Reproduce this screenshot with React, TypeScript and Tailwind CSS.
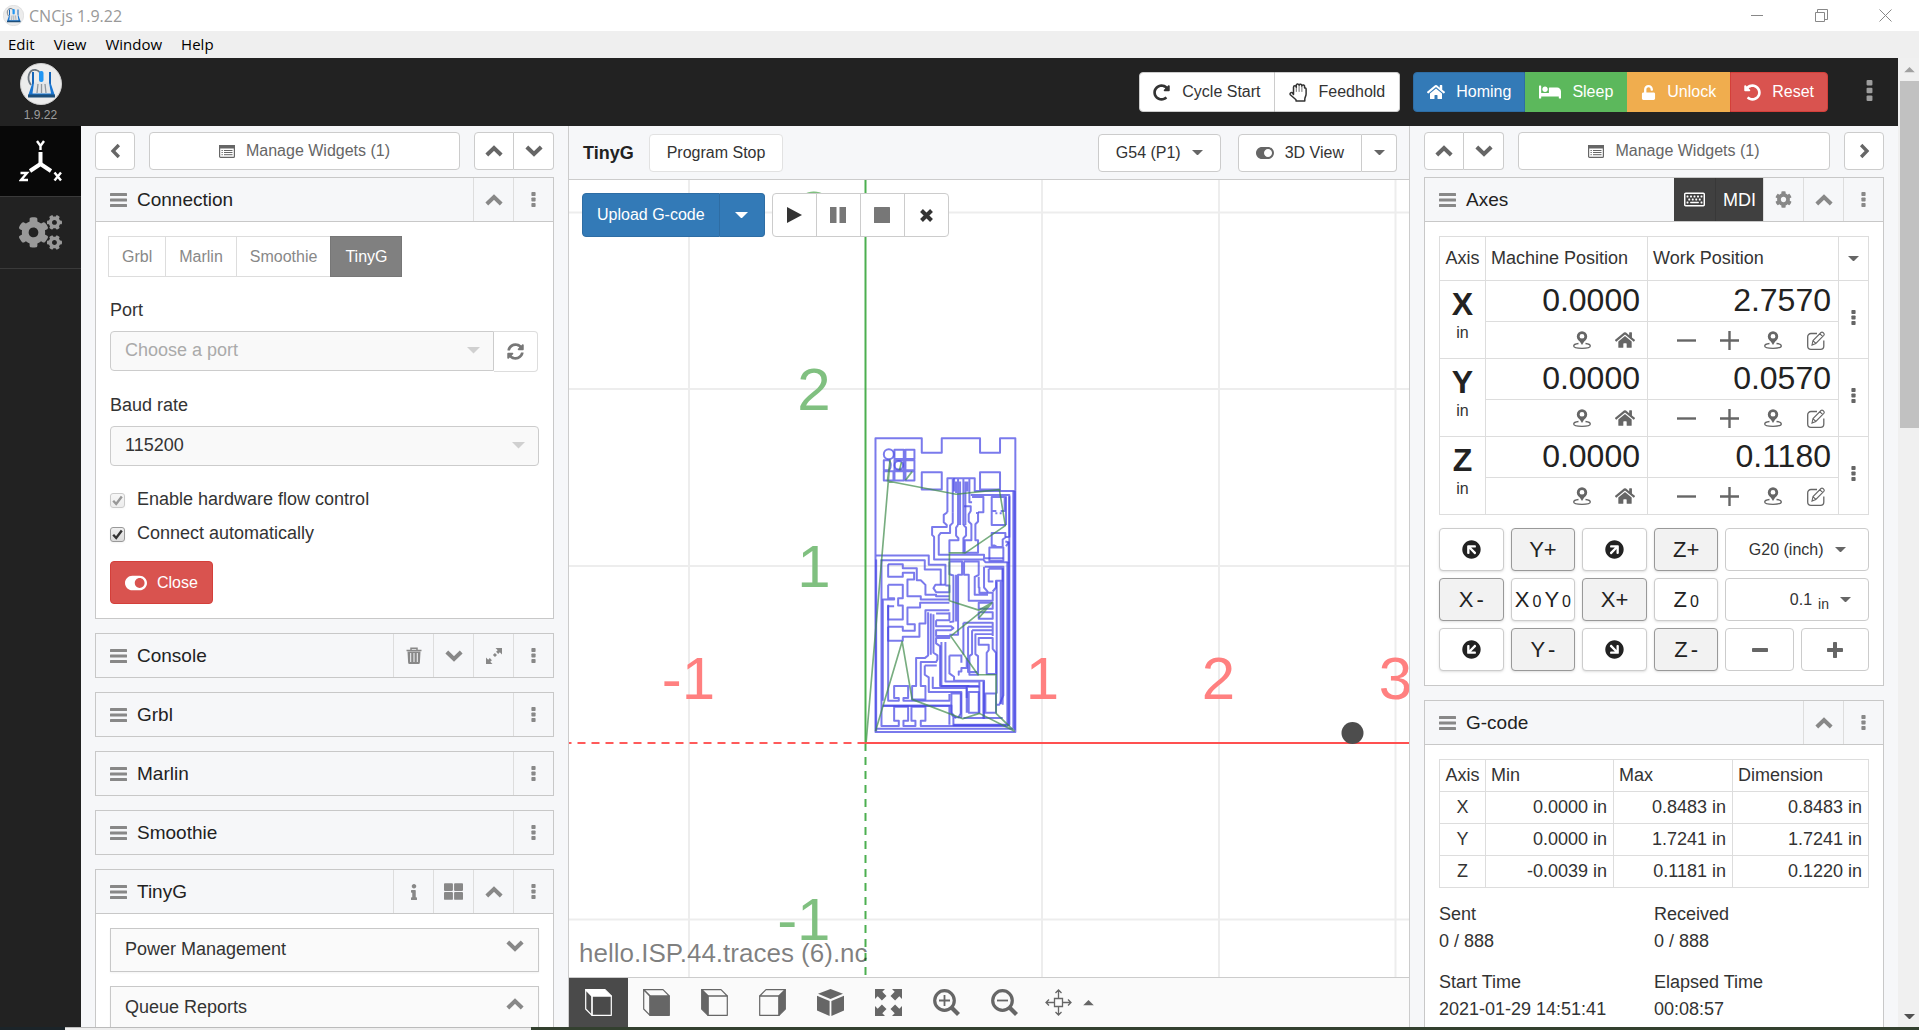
import React from "react";
import {
  FaArrowCircleUp,
  FaBed,
  FaCog,
  FaCogs,
  FaHome,
  FaInfo,
  FaRedoAlt,
  FaRegKeyboard,
  FaSyncAlt,
  FaThLarge,
  FaToggleOn,
  FaUndoAlt,
  FaUnlock,
} from "react-icons/fa";

type Dir = "up" | "down" | "left" | "right";

const chevronTurn: Record<Dir, string> = {
  up: "",
  down: "rotate-180",
  left: "-rotate-90",
  right: "rotate-90",
};

function Chevron({ dir, small = false }: { dir: Dir; small?: boolean }) {
  return (
    <svg viewBox="0 0 18 12" className={`${small ? "w-[15px]" : "w-[18px]"} shrink-0 ${chevronTurn[dir]}`} aria-hidden="true">
      <path d="M1.800 10 9 3l7.200 7" fill="none" stroke="currentColor" strokeWidth="4" />
    </svg>
  );
}

function Dots({ large = false }: { large?: boolean }) {
  return (
    <svg viewBox="0 0 5 15" className={large ? "h-[21px] w-[7px]" : "h-[15px] w-[5px]"} fill="currentColor" aria-hidden="true">
      <rect x="0.400" y="0" width="4.200" height="4" rx="0.800" />
      <rect x="0.400" y="5.500" width="4.200" height="4" rx="0.800" />
      <rect x="0.400" y="11" width="4.200" height="4" rx="0.800" />
    </svg>
  );
}

function Bars() {
  return (
    <svg viewBox="0 0 17 14" className="h-[14px] w-[17px] shrink-0 text-[#888]" fill="currentColor" aria-hidden="true">
      <rect y="0" width="17" height="3" rx="0.500" />
      <rect y="5.500" width="17" height="3" rx="0.500" />
      <rect y="11" width="17" height="3" rx="0.500" />
    </svg>
  );
}

function Caret({ up = false, wide = false }: { up?: boolean; wide?: boolean }) {
  return (
    <svg viewBox="0 0 12 6" className={`${wide ? "w-[13px]" : "w-[11px]"} shrink-0 ${up ? "rotate-180" : ""}`} fill="currentColor" aria-hidden="true">
      <path d="M0 0h12L6 6z" />
    </svg>
  );
}

function ListIcon() {
  return (
    <svg viewBox="0 0 16 13" className="h-[13px] w-4 text-[#666]" aria-hidden="true">
      <rect x="0.600" y="0.600" width="14.800" height="11.800" rx="1" fill="none" stroke="currentColor" strokeWidth="1.200" />
      <path d="M0 0h16v3.500H0z" fill="currentColor" />
      <path d="M2.500 5.500h1.300M2.500 7.500h1.300M2.500 9.700h1.300M5 5.500h8.500M5 7.500h8.500M5 9.700h8.500" stroke="currentColor" strokeWidth="1" />
    </svg>
  );
}

function HandIcon() {
  return (
    <svg viewBox="0 0 18 19" className="h-[19px] w-[18px]" fill="none" stroke="currentColor" strokeWidth="1.500" strokeLinejoin="round" strokeLinecap="round" aria-hidden="true">
      <path d="M4.500 11.500V4.200a1.400 1.400 0 0 1 2.800 0V2.800a1.400 1.400 0 0 1 2.800-.6 1.400 1.400 0 0 1 2.700.7 1.400 1.400 0 0 1 2.700.8l.1 1.200a1.200 1.200 0 0 1 1.500 1.200V11c0 2.300-1.300 3-1.300 5.200V18H7v-1.300L1.300 11.800a1.500 1.500 0 0 1 2-2.100z" />
      <path d="M7.300 4.500v4M10.100 3v5.500M12.900 3.500v5" strokeWidth="0.700" />
    </svg>
  );
}

function Logo({ className }: { className: string }) {
  return (
    <svg viewBox="0 0 42 42" className={className} aria-hidden="true">
      <circle cx="21" cy="21" r="20.500" fill="#ececec" stroke="#cfcfcf" />
      <path d="M11 22C6 15 9 6 16 7c4 1 5 3 5 7" fill="none" stroke="#6d7780" strokeWidth="1.800" />
      <path d="M13 9v12M30 9v12" stroke="#1565b8" strokeWidth="2" />
      <rect x="19" y="8" width="4.500" height="11" rx="2" fill="#2196f3" />
      <path d="M12 21h19l4 12H8z" fill="#1976d2" />
      <path d="M14 19.500h15l2 11H12.500z" fill="#e4e6e8" />
      <path d="M18 21l-1 9M21.500 21v9M25 21l1 9" stroke="#90979d" strokeWidth="1.300" />
      <path d="M8 31.500h27v3H8z" fill="#1d4e79" />
    </svg>
  );
}

function AxesLogo() {
  return (
    <svg viewBox="0 0 44 42" className="h-[42px] w-11" fill="none" stroke="#fff" aria-hidden="true">
      <path d="M21.500 12v13" strokeWidth="4" />
      <path d="M21.500 24 11 31M21.500 24 32 31" strokeWidth="4" />
      <path d="M18 1l3.500 5L25 1M21.500 5.500V10" strokeWidth="2.400" />
      <path d="M1.500 33H8l-6 7h7" strokeWidth="2.400" />
      <path d="M35.500 32.500l6.500 8M42 32.500l-6.500 8" strokeWidth="2.400" />
    </svg>
  );
}

function TrashIcon() {
  return (
    <svg viewBox="0 0 16 17" className="h-[17px] w-4" aria-hidden="true">
      <path d="M5 3V1.200h6V3M0.500 3.500h15" fill="none" stroke="currentColor" strokeWidth="1.500" />
      <path fillRule="evenodd" fill="currentColor" d="M1.500 4.500h13l-.6 11a1.500 1.500 0 0 1-1.500 1.500H3.600a1.500 1.500 0 0 1-1.500-1.500zM4.200 6v9h1V6zM7.500 6v9h1V6zM10.800 6v9h1V6z" />
    </svg>
  );
}

function ResizeIcon() {
  return (
    <svg viewBox="0 0 18 18" className="size-[18px]" fill="currentColor" aria-hidden="true">
      <path d="M10.500 1H17v6.500l-2.200-2.200-1.600 1.600-2.100-2.100 1.600-1.600zM9.900 6l2.100 2.100-2 2L7.900 8zM7.500 17H1v-6.500l2.200 2.200 1.600-1.600 2.100 2.100-1.600 1.600z" />
    </svg>
  );
}

function PinIcon() {
  return (
    <svg viewBox="0 0 18 18" className="size-[18px]" fill="none" stroke="currentColor" aria-hidden="true">
      <circle cx="9" cy="5.500" r="3.800" strokeWidth="2.800" />
      <path d="M5 7.500 9 14l4-6.500z" fill="currentColor" stroke="none" />
      <path d="M5.500 12.500C2.500 12.800.7 13.800.7 15c0 1.400 3.500 2.300 8.300 2.300s8.300-.9 8.300-2.300c0-1.200-1.800-2.200-4.800-2.500" strokeWidth="1.300" />
    </svg>
  );
}

function EditIcon() {
  return (
    <svg viewBox="0 0 18 19" className="h-[19px] w-[18px]" fill="none" stroke="currentColor" strokeWidth="1.300" aria-hidden="true">
      <path d="M10 2.500H4A3.300 3.300 0 0 0 .7 5.800v9.200A3.300 3.300 0 0 0 4 18.300h9.500a3.300 3.300 0 0 0 3.300-3.300V9.500" />
      <path d="M5 14l1-4.500 8-8a1.500 1.500 0 0 1 2 0l.8.800a1.500 1.500 0 0 1 0 2l-8 8.200zM13 2.800l2.800 2.800M6 9.700l2.700 2.700" strokeWidth="1.100" />
    </svg>
  );
}

function PlusIcon({ minus = false }: { minus?: boolean }) {
  return (
    <svg viewBox="0 0 19 19" className="size-[19px]" stroke="currentColor" strokeWidth="2.400" aria-hidden="true">
      <path d={minus ? "M0 9.500h19" : "M0 9.500h19M9.500 0v19"} />
    </svg>
  );
}

const iconFrame = "size-[27px] shrink-0";

function CubeIcon({ face, flip = false }: { face: "top" | "front" | "left"; flip?: boolean }) {
  const fill = (f: string) => (f === face ? "currentColor" : "none");
  return (
    <svg viewBox="0 0 27 27" className={`${iconFrame} ${flip ? "-scale-x-100" : ""}`} stroke="currentColor" strokeWidth="1.200" strokeLinejoin="round" aria-hidden="true">
      <path d="M.7.700H20L26.300 7H7z" fill={fill("top")} />
      <path d="M.7.700 7 7v19.300L.7 20z" fill={fill("left")} />
      <path d="M7 7h19.300v19.300H7z" fill={fill("front")} />
    </svg>
  );
}

function SolidCube() {
  return (
    <svg viewBox="0 0 27 27" className={iconFrame} fill="currentColor" aria-hidden="true">
      <path d="M13.500 0 26 4.800 13.500 10 1 4.800z" />
      <path d="M0 6.800 12.600 12v15L0 21.500zM27 6.800 14.400 12v15L27 21.500z" />
    </svg>
  );
}

function ExpandIcon() {
  const arrow = "M0 0h10L7.300 2.700l4.200 4.200-4.600 4.600-4.200-4.200L0 10z";
  return (
    <svg viewBox="0 0 27 27" className={iconFrame} fill="currentColor" aria-hidden="true">
      <path d={arrow} />
      <path d={arrow} transform="translate(27 0) scale(-1 1)" />
      <path d={arrow} transform="translate(0 27) scale(1 -1)" />
      <path d={arrow} transform="translate(27 27) scale(-1 -1)" />
    </svg>
  );
}

function ZoomIcon({ plus = false }: { plus?: boolean }) {
  return (
    <svg viewBox="0 0 27 27" className={iconFrame} fill="none" stroke="currentColor" aria-hidden="true">
      <circle cx="11.500" cy="11.500" r="9.800" strokeWidth="3.200" />
      <path d="M18.500 18.500 25.500 25.500" strokeWidth="4.200" />
      <path d={plus ? "M6 11.500h11M11.500 6v11" : "M6 11.500h11"} strokeWidth="1.800" />
    </svg>
  );
}

function PanIcon() {
  return (
    <svg viewBox="0 0 27 27" className={iconFrame} fill="none" stroke="currentColor" strokeWidth="1.300" aria-hidden="true">
      <path d="M9.500 9.500h8v8h-8zM13.500 9.500V1M10.500 4l3-3 3 3M13.500 17.500V26M10.500 23l3 3 3-3M9.500 13.500H1M4 10.500l-3 3 3 3M17.500 13.500H26M23 10.500l3 3-3 3" />
    </svg>
  );
}

const boxButton = "flex items-center justify-center border border-[#ccc] bg-white text-[#666]";

function ManageButton() {
  return (
    <button type="button" className={`${boxButton} h-[38px] flex-1 gap-[11px] rounded text-base text-[#333]`}>
      <ListIcon />
      Manage Widgets (1)
    </button>
  );
}

function ChevronPair() {
  return (
    <div className="flex">
      <button type="button" aria-label="Collapse all" className={`${boxButton} h-[38px] w-10 rounded-l`}>
        <Chevron dir="up" />
      </button>
      <button type="button" aria-label="Expand all" className={`${boxButton} h-[38px] w-10 rounded-r border-l-0`}>
        <Chevron dir="down" />
      </button>
    </div>
  );
}

function HeadButton({ label, children }: { label: string; children: React.ReactNode }) {
  return (
    <button type="button" aria-label={label} className="flex w-10 items-center justify-center border-l border-[#ddd] text-[#888]">
      {children}
    </button>
  );
}

function Widget({ title, tools, children }: { title: string; tools?: React.ReactNode; children?: React.ReactNode }) {
  return (
    <section className="shrink-0 border border-[#c8c8c8] bg-[#f6f7f9]">
      <header className="flex h-[43px] items-stretch">
        <div className="flex flex-1 items-center gap-2.5 pl-3.5">
          <Bars />
          <h2 className="text-[19px] leading-6 text-[#222]">{title}</h2>
        </div>
        {tools}
        <HeadButton label={`${title} menu`}>
          <Dots />
        </HeadButton>
      </header>
      {children && <div className="border-t border-[#c8c8c8] bg-white py-3.5">{children}</div>}
    </section>
  );
}

function Check({ label, id, muted = false }: { label: string; id: string; muted?: boolean }) {
  return (
    <div className="flex h-6 items-center gap-3">
      <span className={`grid size-[15px] ${muted ? "opacity-50" : ""}`}>
        <input
          id={id}
          type="checkbox"
          defaultChecked
          disabled={muted}
          className="col-start-1 row-start-1 size-[15px] appearance-none rounded-[3px] border border-[#999] bg-linear-to-b from-[#f0f0f0] to-[#dcdcdc] shadow-xs"
        />
        <svg viewBox="0 0 15 15" className="pointer-events-none col-start-1 row-start-1 size-[15px]" aria-hidden="true">
          <path d="M3.200 7.800 6.200 11 11.800 3.500" fill="none" stroke="#333" strokeWidth="2.400" />
        </svg>
      </span>
      <label htmlFor={id} className="pb-0.5 leading-6">
        {label}
      </label>
    </div>
  );
}

function ConnectionWidget() {
  return (
    <Widget
      title="Connection"
      tools={
        <HeadButton label="Collapse">
          <Chevron dir="up" />
        </HeadButton>
      }
    >
      <div className="flex px-3 text-base">
        {["Grbl", "Marlin", "Smoothie"].map((name) => (
          <button key={name} type="button" className="h-[41px] border border-r-0 border-[#ddd] px-[13px] text-[#888]">
            {name}
          </button>
        ))}
        <button type="button" className="h-[41px] border border-[#777] bg-[#808080] px-3.5 text-white">
          TinyG
        </button>
      </div>
      <div className="px-3.5 text-lg text-[#333]">
        <label htmlFor="port" className="mt-[21px] mb-[9px] block leading-6">
          Port
        </label>
        <div className="flex h-[41px]">
          <div className="relative flex-1">
            <select id="port" disabled className="h-10 w-full appearance-none rounded-l border border-[#ccc] bg-[#f9f9f9] px-3.5 pb-0.5 text-[#aaa] opacity-100">
              <option>Choose a port</option>
            </select>
            <span className="pointer-events-none absolute top-4 right-3.5 text-[#d0d0d0]">
              <Caret wide />
            </span>
          </div>
          <button type="button" aria-label="Refresh ports" className="mr-px flex w-11 items-center justify-center rounded-r border border-l-0 border-[#ddd] text-[#777]">
            <FaSyncAlt size={17} />
          </button>
        </div>
        <label htmlFor="baud" className="mt-[21px] mb-[9px] block leading-6">
          Baud rate
        </label>
        <div className="relative">
          <select id="baud" disabled className="block h-10 w-full appearance-none rounded border border-[#ccc] bg-[#f9f9f9] px-3.5 pb-0.5 text-[#333] opacity-100">
            <option>115200</option>
          </select>
          <span className="pointer-events-none absolute top-4 right-3.5 text-[#d0d0d0]">
            <Caret wide />
          </span>
        </div>
        <div className="mt-[22px] flex flex-col gap-2.5">
          <Check id="flow" label="Enable hardware flow control" muted />
          <Check id="auto" label="Connect automatically" />
        </div>
        <button type="button" className="mt-[15px] flex h-[43px] items-center gap-2.5 rounded border border-[#d43f3a] bg-[#d9534f] px-3.5 text-base text-white">
          <FaToggleOn size={22} />
          Close
        </button>
      </div>
    </Widget>
  );
}

function Fold({ title, dir }: { title: string; dir: Dir }) {
  return (
    <button type="button" className="flex h-11 w-full items-center justify-between border border-[#c8c8c8] bg-[#fafafa] px-3.5 pb-0.5 text-lg text-[#333] shadow-xs">
      {title}
      <span className="pb-1.5 text-[#888]">
        <Chevron dir={dir} />
      </span>
    </button>
  );
}

function LeftPane() {
  return (
    <div className="flex w-[487px] shrink-0 flex-col gap-3.5 overflow-hidden px-3.5 pt-1.5">
      <div className="-mb-[7px] flex gap-3.5">
        <button type="button" aria-label="Hide left panel" className={`${boxButton} h-[38px] w-10 rounded`}>
          <Chevron dir="left" small />
        </button>
        <ManageButton />
        <ChevronPair />
      </div>
      <ConnectionWidget />
      <Widget
        title="Console"
        tools={
          <>
            <HeadButton label="Clear">
              <TrashIcon />
            </HeadButton>
            <HeadButton label="Expand">
              <Chevron dir="down" />
            </HeadButton>
            <HeadButton label="Full screen">
              <ResizeIcon />
            </HeadButton>
          </>
        }
      />
      <Widget title="Grbl" />
      <Widget title="Marlin" />
      <Widget title="Smoothie" />
      <Widget
        title="TinyG"
        tools={
          <>
            <HeadButton label="Info">
              <FaInfo size={16} />
            </HeadButton>
            <HeadButton label="Modules">
              <FaThLarge size={19} />
            </HeadButton>
            <HeadButton label="Collapse">
              <Chevron dir="up" />
            </HeadButton>
          </>
        }
      >
        <div className="flex flex-col gap-3.5 px-3.5">
          <Fold title="Power Management" dir="down" />
          <Fold title="Queue Reports" dir="up" />
        </div>
      </Widget>
    </div>
  );
}

const traces = [
  "M48 40H187V83H247V40H362V83H422V40H468V922H48Z",
  "M187 142H247V194H187ZM362 142H422V194H362Z",
  "M105 74h28v28h-28zM138 74h27v28h-27zM73 106h16q10 15 0 30H73zM105 106h28v30h-28zM138 106h27v30h-27zM73 139h29v28H73zM105 139h28v28h-28zM138 139h27v28h-27z",
  "M264 262V160H346V198H466M280 160V262M296 160V300M312 160V300M330 160V232H338",
  "M264 262L253 270V292L262 300V306H218V330L224 336V404H372L378 412H448V352L438 350M448 336L438 336",
  "M280 262V294L272 302V324H244L238 332V390H374V400H432",
  "M284 160V200M290 170V204M302 170V300M318 170V300M324 170V200",
  "M296 300L290 308V332L297 340V346H270V384M312 300L320 308V332L312 340V386",
  "M314 244H334V258L328 268V290L336 298V346H316V384H356V346H348V298L356 290V264H350",
  "M356 262H372V216H338M334 210H450V338M440 300V214M466 198V916",
  "M397 258V216H436V258H424M411 258H397V300H440M411 262V268M424 262V268",
  "M397 324H438V338L430 344V366H412L406 362H397ZM390 368H432V408H390ZM448 352L440 364",
  "M50 392H208V420H258V480M64 406H196V434H244V480M50 404V920",
  "M66 404V904H118V888H104V846H146V888H132V904H168V888H156V846H198V888H184V904H444V412",
  "M86 418H130V430H172V466H184L198 480V510H230V514H270",
  "M86 418V456H130V444H164V464H144V514H184V524H270",
  "M86 480H130V520H116V542H130V584H86V544H104M86 480V520H104V524H70V828",
  "M86 540V828H118V820H104V784H146V820H132V828H270V808",
  "M86 606V648H130V636H180V596H198V556H270M86 606H130V618H166V598H144V548H182V534H270",
  "M258 480H228L222 490L230 502H270V482H258",
  "M206 562V692L196 700H170V784H158V824H198V784H184V712H230L234 704V692L222 684V568",
  "M230 566H270M230 586H270V562M214 566V690M230 586V604H274L282 610L274 616H230V634H270V640H230V656L242 664V784H330",
  "M196 722H232M196 722V750L208 758V802H306V878H282L276 866V842H70M220 756V790H322V820",
  "M270 410H308V450H296V630H270M270 410V448L282 452V590L270 592M290 450V590",
  "M314 410H358V450L346 456V510H386M314 410V450H328V528H400V504H360V488H358V456",
  "M374 426V488L386 502M376 426H432V812L420 840H412M388 432H430V468H410V488L400 500M388 432V470H402",
  "M358 534H400V552H358ZM358 562H400V582H358ZM312 594H400V606M312 594V690M326 606H400V634M326 606V742H356M338 616H398M338 616V688L330 694V750H356V694L348 688V628H398",
  "M358 640H400V672L410 684V748H382V684L388 676V660H358Z",
  "M258 652V770H360V866M246 652V784H358M270 692H306V714M270 692V746L284 756V768H374V880H312M300 750H298V740H306V730H322V700",
  "M328 802H358V864H328ZM322 786V864M322 786H360M378 806H410V864H378ZM372 770V880H430",
  "M274 806H304V866L296 880M276 806V864L290 880M282 880V902H440",
  "M424 470V838M412 470V806M430 430V840M448 412V904M70 844H270V900",
  "M462 200V912M450 214V900H282M50 912H462",
];

const travels =
  "M20 952 92 104M92 104 84 168 290 208 420 194 438 302 318 384H270V528L358 556 398 534 274 634 356 750H410V866M398 534 358 580M120 136 126 112M138 166 158 140M48 920 128 650 158 824 310 882 360 866 466 920M466 920 410 866";

function Canvas() {
  return (
    <svg viewBox="569 180 841 797" preserveAspectRatio="xMidYMid slice" className="absolute inset-0 size-full" role="img" aria-label="Toolpath preview">
      <path d="M689.500 180V977M1042.500 180V977M1219.500 180V977M1396 180V977M569 212.500H1410M569 389H1410M569 566H1410M569 919.500H1410" stroke="#ededed" strokeWidth="2" />
      <g transform="translate(860 425) scale(0.333)" fill="none" strokeLinejoin="round">
        <g stroke="#4646e4" strokeWidth="6" strokeOpacity="0.720">
          {traces.map((d) => (
            <path key={d} d={d} />
          ))}
          <circle cx="88" cy="88" r="15" />
          <circle cx="118" cy="121" r="13" />
        </g>
        <path d={travels} stroke="#3f8a4a" strokeWidth="5" strokeOpacity="0.700" />
      </g>
      <path d="M866 180V743" stroke="#4caf50" strokeWidth="2" />
      <path d="M866 743V977" stroke="#4caf50" strokeWidth="2" strokeDasharray="8 6" />
      <path d="M866 743H1410" stroke="#ff5050" strokeWidth="2" />
      <path d="M866 743H569" stroke="#ff5a5a" strokeWidth="2" strokeDasharray="8 6" />
      <g fontFamily="Liberation Sans, Arial, sans-serif" fontSize="60" fill="#80c080" textAnchor="end">
        <text x="831" y="233">3</text>
        <text x="831" y="410">2</text>
        <text x="831" y="587">1</text>
        <text x="831" y="940">-1</text>
      </g>
      <g fontFamily="Liberation Sans, Arial, sans-serif" fontSize="60" fill="#ff8080" textAnchor="middle">
        <text x="689" y="699">-1</text>
        <text x="1043" y="699">1</text>
        <text x="1219" y="699">2</text>
        <text x="1396" y="699">3</text>
      </g>
      <circle cx="1353" cy="733" r="11" fill="#4d4d4d" />
    </svg>
  );
}

function CenterPane() {
  return (
    <main className="flex min-w-0 flex-1 flex-col border-x border-[#ccc]">
      <div className="flex h-[54px] items-center border-b border-[#ccc] pr-3 pl-3.5">
        <strong className="text-lg font-bold text-[#222]">TinyG</strong>
        <span className="ml-[15px] flex h-[38px] items-center rounded border border-[#e2e2e2] bg-white px-[17px] text-base text-[#333]">Program Stop</span>
        <button type="button" className={`${boxButton} ml-auto h-[38px] gap-[11px] rounded px-[17px] text-base`}>
          <span className="text-[#333]">G54 (P1)</span>
          <Caret />
        </button>
        <div className="ml-[17px] flex">
          <button type="button" className={`${boxButton} h-[38px] gap-[11px] rounded-l px-[17px] text-base`}>
            <FaToggleOn size={18} />
            <span className="text-[#333]">3D View</span>
          </button>
          <button type="button" aria-label="View options" className={`${boxButton} h-[38px] w-[35px] rounded-r border-l-0`}>
            <Caret />
          </button>
        </div>
      </div>
      <div className="relative flex-1 overflow-hidden bg-white">
        <Canvas />
        <div className="relative flex gap-[7px] px-[13px] pt-[13px]">
          <div className="flex h-11 text-base text-white">
            <button type="button" className="rounded-l border border-[#2e6da4] bg-[#337ab7] px-3.5">
              Upload G-code
            </button>
            <button type="button" aria-label="Upload options" className="flex w-[45px] items-center justify-center rounded-r border border-l-0 border-[#2e6da4] bg-[#337ab7]">
              <Caret wide />
            </button>
          </div>
          <div className="flex h-11 rounded border border-[#ccc] bg-white text-[#333]">
            <button type="button" aria-label="Run" className="flex w-[43px] items-center justify-center">
              <svg viewBox="0 0 15 16" className="h-4 w-[15px]" fill="currentColor" aria-hidden="true">
                <path d="M0 0 15 8 0 16z" />
              </svg>
            </button>
            <button type="button" aria-label="Pause" className="flex w-11 items-center justify-center border-l border-[#ccc] text-[#777]">
              <svg viewBox="0 0 16 16" className="size-4" fill="currentColor" aria-hidden="true">
                <path d="M0 0h6.500v16H0zM9.500 0H16v16H9.500z" />
              </svg>
            </button>
            <button type="button" aria-label="Stop" className="flex w-11 items-center justify-center border-l border-[#ccc] text-[#777]">
              <svg viewBox="0 0 16 16" className="size-4" fill="currentColor" aria-hidden="true">
                <rect width="16" height="16" rx="0.500" />
              </svg>
            </button>
            <button type="button" aria-label="Unload" className="flex w-11 items-center justify-center border-l border-[#ccc]">
              <svg viewBox="0 0 13 13" className="size-[13px]" stroke="currentColor" strokeWidth="4" aria-hidden="true">
                <path d="M1.500 1.500 11.500 11.500M11.500 1.500 1.500 11.500" />
              </svg>
            </button>
          </div>
        </div>
        <p className="absolute bottom-2 left-2.5 text-[26px] leading-8 text-black/50">hello.ISP.44.traces (6).nc</p>
      </div>
      <div className="flex h-[50px] shrink-0 border-t border-[#ccc] bg-[#fafafa] text-[#666]">
        <button type="button" aria-label="Top view" className="flex w-[59px] items-center justify-center bg-[#4a4a4a] text-white">
          <CubeIcon face="top" />
        </button>
        <div className="flex items-center gap-[31px] pl-[15px]">
          <button type="button" aria-label="Front view"><CubeIcon face="front" /></button>
          <button type="button" aria-label="Left view"><CubeIcon face="left" /></button>
          <button type="button" aria-label="Right view"><CubeIcon face="left" flip /></button>
          <button type="button" aria-label="3D view"><SolidCube /></button>
          <button type="button" aria-label="Fit"><ExpandIcon /></button>
          <button type="button" aria-label="Zoom in"><ZoomIcon plus /></button>
          <button type="button" aria-label="Zoom out"><ZoomIcon /></button>
          <button type="button" aria-label="Camera mode" className="-ml-1 flex items-center gap-[11px]">
            <PanIcon />
            <Caret up />
          </button>
        </div>
      </div>
    </main>
  );
}

const axes = [
  { axis: "X", machine: "0.0000", work: "2.7570" },
  { axis: "Y", machine: "0.0000", work: "0.0570" },
  { axis: "Z", machine: "0.0000", work: "0.1180" },
];

const cell = "border border-[#ddd]";

function RowIcon({ label, children }: { label: string; children: React.ReactNode }) {
  return (
    <button type="button" aria-label={label} className="flex h-[36px] w-[43px] items-center justify-center">
      {children}
    </button>
  );
}

function AxesTable() {
  return (
    <table className="w-full table-fixed border-collapse text-left text-lg text-[#333]">
      <colgroup>
        <col className="w-[46px]" />
        <col className="w-[162px]" />
        <col />
        <col className="w-[30px]" />
      </colgroup>
      <thead>
        <tr className="h-11">
          <th className={`${cell} pb-0.5 text-center font-normal`}>Axis</th>
          <th className={`${cell} pb-0.5 pl-[5px] font-normal`}>Machine Position</th>
          <th className={`${cell} pb-0.5 pl-[5px] font-normal`}>Work Position</th>
          <th className={cell}>
            <button type="button" aria-label="Axis options" className="flex w-full justify-center text-[#666]">
              <Caret />
            </button>
          </th>
        </tr>
      </thead>
      <tbody>
        {axes.map((a) => (
          <React.Fragment key={a.axis}>
            <tr className="h-[41px]">
              <th rowSpan={2} className={`${cell} text-center align-top font-normal`}>
                <div className="pt-[7px] text-[32px] leading-8 font-bold text-[#222]">{a.axis}</div>
                <div className="pt-px text-base leading-6">in</div>
              </th>
              <td className={`${cell} pr-[7px] pb-0.5 text-right text-[32px] leading-9 text-[#222]`}>{a.machine}</td>
              <td className={`${cell} pr-[7px] pb-0.5 text-right text-[32px] leading-9 text-[#222]`}>{a.work}</td>
              <td rowSpan={2} className={cell}>
                <button type="button" aria-label={`${a.axis} options`} className="flex w-full justify-center pb-1 text-[#666]">
                  <Dots />
                </button>
              </td>
            </tr>
            <tr className="h-[37px]">
              <td className={cell}>
                <div className="flex justify-end pr-px text-[#666]">
                  <RowIcon label="Go to machine zero"><PinIcon /></RowIcon>
                  <RowIcon label="Home"><FaHome size={20} /></RowIcon>
                </div>
              </td>
              <td className={cell}>
                <div className="flex justify-end pr-px text-[#666]">
                  <RowIcon label="Decrease"><PlusIcon minus /></RowIcon>
                  <RowIcon label="Increase"><PlusIcon /></RowIcon>
                  <RowIcon label="Go to work zero"><PinIcon /></RowIcon>
                  <RowIcon label="Edit"><EditIcon /></RowIcon>
                </div>
              </td>
            </tr>
          </React.Fragment>
        ))}
      </tbody>
    </table>
  );
}

function JogButton({ active = false, label, children }: { active?: boolean; label?: string; children: React.ReactNode }) {
  return (
    <button
      type="button"
      aria-label={label}
      className={`flex h-[43px] items-center justify-center gap-[3px] rounded border text-[22px] text-[#222] shadow ${active ? "border-[#999] bg-[#f2f2f2]" : "border-[#ccc] bg-white"}`}
    >
      {children}
    </button>
  );
}

const zero = "pt-1 text-base";
const flat = "flex h-[43px] items-center rounded border border-[#ccc] bg-white text-[#666]";

function JogPad() {
  return (
    <div className="mt-[13px] grid grid-cols-[repeat(4,minmax(0,9fr))_minmax(0,20fr)] gap-[7px]">
      <JogButton label="Jog X- Y+"><FaArrowCircleUp size={19} className="-rotate-45" /></JogButton>
      <JogButton active>Y+</JogButton>
      <JogButton label="Jog X+ Y+"><FaArrowCircleUp size={19} className="rotate-45" /></JogButton>
      <JogButton active>Z+</JogButton>
      <button type="button" className={`${flat} justify-center gap-[11px] text-base`}>
        <span className="text-[#333]">G20 (inch)</span>
        <Caret />
      </button>
      <JogButton active><span>X</span><span>-</span></JogButton>
      <JogButton><span>X</span><span className={zero}>0</span><span>Y</span><span className={zero}>0</span></JogButton>
      <JogButton active>X+</JogButton>
      <JogButton><span>Z</span><span className={zero}>0</span></JogButton>
      <button type="button" className={`${flat} justify-end pr-[17px] text-base`}>
        <span className="text-[#333]">0.1</span>
        <span className="ml-1.5 pt-2 text-sm text-[#333]">in</span>
        <span className="ml-[11px]"><Caret /></span>
      </button>
      <JogButton label="Jog X- Y-"><FaArrowCircleUp size={19} className="rotate-[225deg]" /></JogButton>
      <JogButton active><span>Y</span><span>-</span></JogButton>
      <JogButton label="Jog X+ Y-"><FaArrowCircleUp size={19} className="rotate-[135deg]" /></JogButton>
      <JogButton active><span>Z</span><span>-</span></JogButton>
      <div className="grid grid-cols-2 gap-[7px]">
        <button type="button" aria-label="Smaller step" className={`${flat} justify-center`}>
          <svg viewBox="0 0 16 16" className="size-4" fill="currentColor" aria-hidden="true"><rect y="6" width="16" height="4" rx="0.800" /></svg>
        </button>
        <button type="button" aria-label="Larger step" className={`${flat} justify-center`}>
          <svg viewBox="0 0 16 16" className="size-4" fill="currentColor" aria-hidden="true">
            <rect y="6" width="16" height="4" rx="0.800" />
            <rect x="6" width="4" height="16" rx="0.800" />
          </svg>
        </button>
      </div>
    </div>
  );
}

const bounds = [
  ["X", "0.0000 in", "0.8483 in", "0.8483 in"],
  ["Y", "0.0000 in", "1.7241 in", "1.7241 in"],
  ["Z", "-0.0039 in", "0.1181 in", "0.1220 in"],
];

const stats = [
  ["Sent", "0 / 888"],
  ["Received", "0 / 888"],
  ["Start Time", "2021-01-29 14:51:41"],
  ["Elapsed Time", "00:08:57"],
];

function RightPane() {
  return (
    <div className="flex w-[488px] shrink-0 flex-col gap-3.5 overflow-hidden px-3.5 pt-1.5">
      <div className="-mb-[7px] flex gap-3.5">
        <ChevronPair />
        <ManageButton />
        <button type="button" aria-label="Hide right panel" className={`${boxButton} h-[38px] w-10 rounded`}>
          <Chevron dir="right" small />
        </button>
      </div>
      <Widget
        title="Axes"
        tools={
          <>
            <button type="button" aria-label="Keypad" className="flex w-[41px] items-center justify-center bg-[#404040] text-white">
              <FaRegKeyboard size={21} />
            </button>
            <button type="button" className="w-12 border-l border-[#383838] bg-[#404040] text-lg text-white">
              MDI
            </button>
            <HeadButton label="Settings">
              <FaCog size={17} />
            </HeadButton>
            <HeadButton label="Collapse">
              <Chevron dir="up" />
            </HeadButton>
          </>
        }
      >
        <div className="px-3.5">
          <AxesTable />
          <JogPad />
        </div>
      </Widget>
      <Widget
        title="G-code"
        tools={
          <HeadButton label="Collapse">
            <Chevron dir="up" />
          </HeadButton>
        }
      >
        <div className="px-3.5 text-lg text-[#333]">
          <table className="w-full table-fixed border-collapse">
            <colgroup>
              <col className="w-[46px]" />
              <col className="w-[128px]" />
              <col className="w-[119px]" />
              <col />
            </colgroup>
            <thead>
              <tr className="h-8 text-left">
                <th className={`${cell} pb-0.5 text-center font-normal`}>Axis</th>
                <th className={`${cell} pb-0.5 pl-[5px] font-normal`}>Min</th>
                <th className={`${cell} pb-0.5 pl-[5px] font-normal`}>Max</th>
                <th className={`${cell} pb-0.5 pl-[5px] font-normal`}>Dimension</th>
              </tr>
            </thead>
            <tbody>
              {bounds.map(([axis, ...values]) => (
                <tr key={axis} className="h-8">
                  <td className={`${cell} pb-0.5 text-center`}>{axis}</td>
                  {values.map((v, i) => (
                    <td key={i} className={`${cell} pr-1.5 pb-0.5 text-right`}>
                      {v}
                    </td>
                  ))}
                </tr>
              ))}
            </tbody>
          </table>
          <dl className="mt-[13px] grid grid-cols-2 gap-y-[15px]">
            {stats.map(([k, v]) => (
              <div key={k}>
                <dt className="pb-px leading-[26px]">{k}</dt>
                <dd className="leading-[26px]">{v}</dd>
              </div>
            ))}
          </dl>
        </div>
      </Widget>
    </div>
  );
}

const topButton = "flex h-10 items-center border text-base";

function TopBar() {
  return (
    <header className="flex h-[68px] shrink-0 items-center bg-[#222]">
      <a href="#home" className="flex w-[81px] flex-col items-center">
        <Logo className="size-[42px]" />
        <span className="pt-1 text-xs leading-3 text-[#9d9d9d]">1.9.22</span>
      </a>
      <div className="ml-auto flex text-[#333]">
        <button type="button" className={`${topButton} gap-3 rounded-l border-[#ccc] bg-white px-[13px]`}>
          <FaRedoAlt size={17} />
          Cycle Start
        </button>
        <button type="button" className={`${topButton} gap-3 rounded-r border-l-0 border-[#ccc] bg-white px-3.5`}>
          <HandIcon />
          Feedhold
        </button>
      </div>
      <div className="ml-[13px] flex text-white">
        <button type="button" className={`${topButton} gap-[11px] rounded-l border-[#2e6da4] bg-[#337ab7] px-[13px]`}>
          <FaHome size={18} />
          Homing
        </button>
        <button type="button" className={`${topButton} gap-[11px] border-[#5cb85c] bg-[#5cb85c] px-[13px]`}>
          <FaBed size={22} />
          Sleep
        </button>
        <button type="button" className={`${topButton} gap-[11px] border-[#f0ad4e] bg-[#f0ad4e] px-[13px]`}>
          <FaUnlock size={15} />
          Unlock
        </button>
        <button type="button" className={`${topButton} gap-[11px] rounded-r border-[#d43f3a] bg-[#d9534f] px-[13px]`}>
          <FaUndoAlt size={17} />
          Reset
        </button>
      </div>
      <button type="button" aria-label="More" className="mr-[25px] ml-[38px] pb-1 text-[#9d9d9d]">
        <Dots large />
      </button>
    </header>
  );
}

export default function App() {
  return (
    <div className="flex h-screen flex-col overflow-hidden bg-white font-['Liberation_Sans',Arial,sans-serif]">
      <div className="flex h-[31px] shrink-0 items-center pr-[27px] pl-[3px] font-['Open_Sans','Noto_Sans',sans-serif] text-[#999]">
        <Logo className="size-[21px]" />
        <span className="ml-[5px] text-base leading-6">CNCjs 1.9.22</span>
        <div className="ml-auto flex items-center gap-[51px]">
          <button type="button" aria-label="Minimize">
            <svg viewBox="0 0 13 13" className="size-[13px]" stroke="#888" aria-hidden="true"><path d="M0 6.500h12" /></svg>
          </button>
          <button type="button" aria-label="Restore">
            <svg viewBox="0 0 13 13" className="size-[13px]" stroke="#888" fill="none" aria-hidden="true"><path d="M.5 3.500h9v9h-9zM2.500 3V.500h10v10H10" /></svg>
          </button>
          <button type="button" aria-label="Close window">
            <svg viewBox="0 0 13 13" className="size-[13px]" stroke="#888" aria-hidden="true"><path d="M.5.500 12.500 12.500M12.500.500.500 12.500" /></svg>
          </button>
        </div>
      </div>
      <nav className="flex h-[27px] shrink-0 items-center gap-[19px] bg-[#efefef] pl-2 font-['Open_Sans','Noto_Sans',sans-serif] text-[15px] text-black">
        <button type="button">Edit</button>
        <button type="button">View</button>
        <button type="button">Window</button>
        <button type="button">Help</button>
      </nav>
      <div className="flex min-h-0 flex-1">
        <div className="flex min-w-0 flex-1 flex-col">
          <TopBar />
          <div className="flex min-h-0 flex-1 bg-[#f6f7f9]">
            <nav className="w-[81px] shrink-0 bg-[#222]">
              <a href="#workspace" aria-label="Workspace" className="flex h-[71px] items-center justify-center border-b border-[#3a3a3a] bg-[#080808]">
                <AxesLogo />
              </a>
              <a href="#settings" aria-label="Settings" className="flex h-[72px] items-center justify-center border-b border-[#3a3a3a] text-[#999]">
                <FaCogs size={43} />
              </a>
            </nav>
            <LeftPane />
            <CenterPane />
            <RightPane />
          </div>
        </div>
        <div className="flex w-[21px] shrink-0 flex-col items-center bg-[#f0f0f0] pl-0.5">
          <div className="flex h-[23px] items-center text-[#a0a0a0]">
            <Caret up />
          </div>
          <div className="h-[347px] w-full bg-[#c1c1c1]" />
          <div className="mt-auto pb-2 text-[#505050]">
            <Caret />
          </div>
        </div>
      </div>
      <div className="flex h-[3px] shrink-0 bg-[#33402f]">
        <div className="w-[65px] bg-[#1b2429]" />
        <div className="w-[466px] border-t border-[#bbb] bg-[#eee]" />
      </div>
    </div>
  );
}
